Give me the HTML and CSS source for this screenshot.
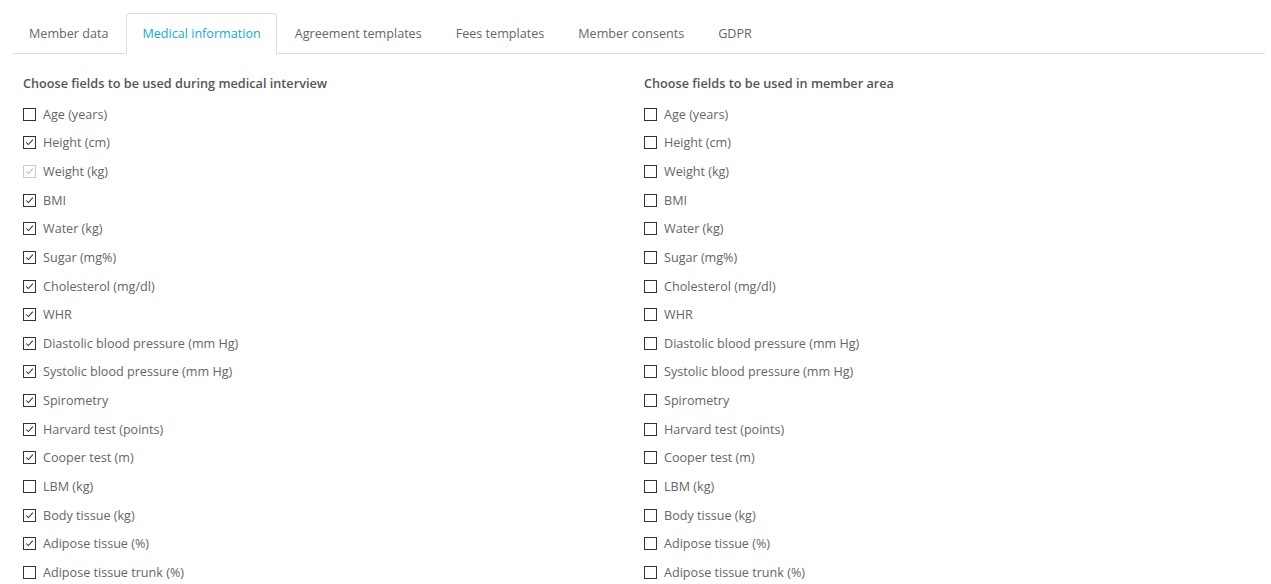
FILE: index.html
```html
<!DOCTYPE html>
<html lang="en">

<head>
    <meta charset="UTF-8">
    <title>Settings</title>
    <link rel="stylesheet" href="styles.css">
</head>

<body>
    <div class="page">
        <ul class="tabs">
            <li class="tab">Member data</li>
            <li class="tab active">Medical information</li>
            <li class="tab">Agreement templates</li>
            <li class="tab">Fees templates</li>
            <li class="tab">Member consents</li>
            <li class="tab">GDPR</li>
        </ul>

        <div class="columns">
            <div class="column">
                <h4>Choose fields to be used during medical interview</h4>
                <div class="field"><span class="box"></span>Age (years)</div>
                <div class="field"><span class="box checked"><svg viewBox="0 0 13 13"><path d="M2.5 6.5 L5.2 9 L10.5 3.2"/></svg></span>Height (cm)</div>
                <div class="field"><span class="box checked disabled"><svg viewBox="0 0 13 13"><path d="M2.5 6.5 L5.2 9 L10.5 3.2"/></svg></span>Weight (kg)</div>
                <div class="field"><span class="box checked"><svg viewBox="0 0 13 13"><path d="M2.5 6.5 L5.2 9 L10.5 3.2"/></svg></span>BMI</div>
                <div class="field"><span class="box checked"><svg viewBox="0 0 13 13"><path d="M2.5 6.5 L5.2 9 L10.5 3.2"/></svg></span>Water (kg)</div>
                <div class="field"><span class="box checked"><svg viewBox="0 0 13 13"><path d="M2.5 6.5 L5.2 9 L10.5 3.2"/></svg></span>Sugar (mg%)</div>
                <div class="field"><span class="box checked"><svg viewBox="0 0 13 13"><path d="M2.5 6.5 L5.2 9 L10.5 3.2"/></svg></span>Cholesterol (mg/dl)</div>
                <div class="field"><span class="box checked"><svg viewBox="0 0 13 13"><path d="M2.5 6.5 L5.2 9 L10.5 3.2"/></svg></span>WHR</div>
                <div class="field"><span class="box checked"><svg viewBox="0 0 13 13"><path d="M2.5 6.5 L5.2 9 L10.5 3.2"/></svg></span>Diastolic blood pressure (mm Hg)</div>
                <div class="field"><span class="box checked"><svg viewBox="0 0 13 13"><path d="M2.5 6.5 L5.2 9 L10.5 3.2"/></svg></span>Systolic blood pressure (mm Hg)</div>
                <div class="field"><span class="box checked"><svg viewBox="0 0 13 13"><path d="M2.5 6.5 L5.2 9 L10.5 3.2"/></svg></span>Spirometry</div>
                <div class="field"><span class="box checked"><svg viewBox="0 0 13 13"><path d="M2.5 6.5 L5.2 9 L10.5 3.2"/></svg></span>Harvard test (points)</div>
                <div class="field"><span class="box checked"><svg viewBox="0 0 13 13"><path d="M2.5 6.5 L5.2 9 L10.5 3.2"/></svg></span>Cooper test (m)</div>
                <div class="field"><span class="box"></span>LBM (kg)</div>
                <div class="field"><span class="box checked"><svg viewBox="0 0 13 13"><path d="M2.5 6.5 L5.2 9 L10.5 3.2"/></svg></span>Body tissue (kg)</div>
                <div class="field"><span class="box checked"><svg viewBox="0 0 13 13"><path d="M2.5 6.5 L5.2 9 L10.5 3.2"/></svg></span>Adipose tissue (%)</div>
                <div class="field"><span class="box"></span>Adipose tissue trunk (%)</div>
            </div>

            <div class="column">
                <h4>Choose fields to be used in member area</h4>
                <div class="field"><span class="box"></span>Age (years)</div>
                <div class="field"><span class="box"></span>Height (cm)</div>
                <div class="field"><span class="box"></span>Weight (kg)</div>
                <div class="field"><span class="box"></span>BMI</div>
                <div class="field"><span class="box"></span>Water (kg)</div>
                <div class="field"><span class="box"></span>Sugar (mg%)</div>
                <div class="field"><span class="box"></span>Cholesterol (mg/dl)</div>
                <div class="field"><span class="box"></span>WHR</div>
                <div class="field"><span class="box"></span>Diastolic blood pressure (mm Hg)</div>
                <div class="field"><span class="box"></span>Systolic blood pressure (mm Hg)</div>
                <div class="field"><span class="box"></span>Spirometry</div>
                <div class="field"><span class="box"></span>Harvard test (points)</div>
                <div class="field"><span class="box"></span>Cooper test (m)</div>
                <div class="field"><span class="box"></span>LBM (kg)</div>
                <div class="field"><span class="box"></span>Body tissue (kg)</div>
                <div class="field"><span class="box"></span>Adipose tissue (%)</div>
                <div class="field"><span class="box"></span>Adipose tissue trunk (%)</div>
            </div>
        </div>
    </div>
</body>

</html>
```

FILE: styles.css
```css
body {
    font-family: 'Open Sans', sans-serif;
    font-size: 12.6px;
    color: #666666;
    background-color: #ffffff;
    margin: 0;
    padding: 0;
}

.page {
    padding: 13px 6px 0 13px;
}

/* Tabs */
.tabs {
    display: flex;
    list-style: none;
    margin: 0;
    padding: 0;
    border-bottom: 1px solid #dddddd;
}

.tab {
    height: 39px;
    line-height: 39px;
    padding: 0 15px;
    margin-right: 2px;
    margin-bottom: -1px;
    border: 1px solid transparent;
    border-radius: 4px 4px 0 0;
    color: #666666;
}

.tab.active {
    color: #17a9c8;
    border-color: #dddddd;
    border-bottom-color: #ffffff;
    background-color: #ffffff;
}

/* Field lists */
.columns {
    display: grid;
    grid-template-columns: 1fr 1fr;
    padding-left: 10px;
    padding-top: 19px;
}

h4 {
    font-size: 12.7px;
    font-weight: 600;
    color: #555555;
    margin: 0 0 7px 0;
    line-height: 20px;
}

.field {
    display: flex;
    align-items: center;
    height: 28.625px;
}

.box {
    width: 11px;
    height: 11px;
    border: 1px solid #333333;
    margin-right: 7px;
    flex-shrink: 0;
    display: flex;
}

.box svg {
    width: 11px;
    height: 11px;
    fill: none;
    stroke: #333333;
    stroke-width: 1.2;
}

.box.disabled {
    border-color: #cccccc;
}

.box.disabled svg {
    stroke: #bbbbbb;
}
```
